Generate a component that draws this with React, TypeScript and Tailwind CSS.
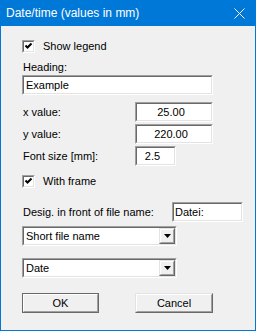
import type { ReactNode } from "react";
import clsx from "clsx";

const Sunken = ({ className, children }: { className?: string; children?: ReactNode }) => (
  <div
    className={clsx(
      "border border-t-[#a0a0a0] border-l-[#a0a0a0] border-b-white border-r-white",
      className
    )}
  >
    <div className="h-full border border-t-[#696969] border-l-[#696969] border-b-[#e3e3e3] border-r-[#e3e3e3] bg-white flex items-center">
      {children}
    </div>
  </div>
);

const Checkbox = ({ label }: { label: string }) => (
  <div className="h-[13px] flex items-center gap-[8px]">
    <Sunken className="w-[13px] h-[13px]">
      <svg width="9" height="9" viewBox="0 0 9 9" className="block">
        <path d="M1.5 3.5 L3.5 5.5 L7.5 1.5" fill="none" stroke="black" strokeWidth="2" />
      </svg>
    </Sunken>
    <span>{label}</span>
  </div>
);

const Field = ({ label, value, width }: { label: string; value: string; width: string }) => (
  <div className="flex items-center h-[20px]">
    <div className="w-[113px] pl-px">{label}</div>
    <Sunken className={clsx("h-[20px]", width)}>
      <div className="w-full text-center pr-[6px]">{value}</div>
    </Sunken>
  </div>
);

const Combo = ({ value }: { value: string }) => (
  <Sunken className="w-[155px] h-[20px]">
    <div className="flex-1 pl-[2px]">{value}</div>
    <div className="w-[16px] h-full border border-t-[#e3e3e3] border-l-[#e3e3e3] border-b-[#696969] border-r-[#696969]">
      <div className="h-full border border-t-white border-l-white border-b-[#a0a0a0] border-r-[#a0a0a0] bg-[#f0f0f0] flex items-center justify-center">
        <svg width="7" height="4" viewBox="0 0 7 4" className="block">
          <path d="M0 0 H7 L3.5 4 Z" fill="black" />
        </svg>
      </div>
    </div>
  </Sunken>
);

const DialogButton = ({ label, isDefault }: { label: string; isDefault?: boolean }) => (
  <div
    className={clsx(
      "h-[20px] border",
      isDefault
        ? "w-[77px] border-[#696969]"
        : "w-[78px] border-t-[#e3e3e3] border-l-[#e3e3e3] border-b-[#696969] border-r-[#696969]"
    )}
  >
    <div className="h-full border border-t-white border-l-white border-b-[#a0a0a0] border-r-[#a0a0a0] bg-[#f0f0f0] flex items-center justify-center">
      {label}
    </div>
  </div>
);

export default function App() {
  return (
    <div className="w-[256px] h-[331px] bg-[#0078d7] px-px pb-px flex flex-col font-['Liberation_Sans',Arial,sans-serif]">
      <div className="h-[26px] flex items-center justify-between pl-[5px] pr-[10px] text-white text-[12px]">
        <span>Date/time (values in mm)</span>
        <svg width="11" height="11" viewBox="0 0 11 11" className="block">
          <path d="M0.5 0.5 L10.5 10.5 M10.5 0.5 L0.5 10.5" stroke="white" strokeWidth="1" />
        </svg>
      </div>

      <div className="flex-1 bg-[#f0f0f0] pl-[21px] pt-[14px] text-[11px] leading-[13px] text-black">
        <Checkbox label="Show legend" />

        <div className="mt-[8px] pl-px">Heading:</div>
        <Sunken className="mt-[1px] w-[191px] h-[20px]">
          <span className="pl-[2px]">Example</span>
        </Sunken>

        <div className="mt-[7px] flex flex-col gap-[2px]">
          <Field label="x value:" value="25.00" width="w-[78px]" />
          <Field label="y value:" value="220.00" width="w-[78px]" />
          <Field label="Font size [mm]:" value="2.5" width="w-[41px]" />
        </div>

        <div className="mt-[9px]">
          <Checkbox label="With frame" />
        </div>

        <div className="mt-[14px] flex items-center h-[20px]">
          <div className="w-[150px] pl-px">Desig. in front of file name:</div>
          <Sunken className="w-[71px] h-[20px]">
            <span className="pl-px">Datei:</span>
          </Sunken>
        </div>

        <div className="mt-[4px]">
          <Combo value="Short file name" />
        </div>
        <div className="mt-[12px]">
          <Combo value="Date" />
        </div>

        <div className="mt-[15px] flex gap-[36px]">
          <DialogButton label="OK" isDefault />
          <DialogButton label="Cancel" />
        </div>
      </div>
    </div>
  );
}
